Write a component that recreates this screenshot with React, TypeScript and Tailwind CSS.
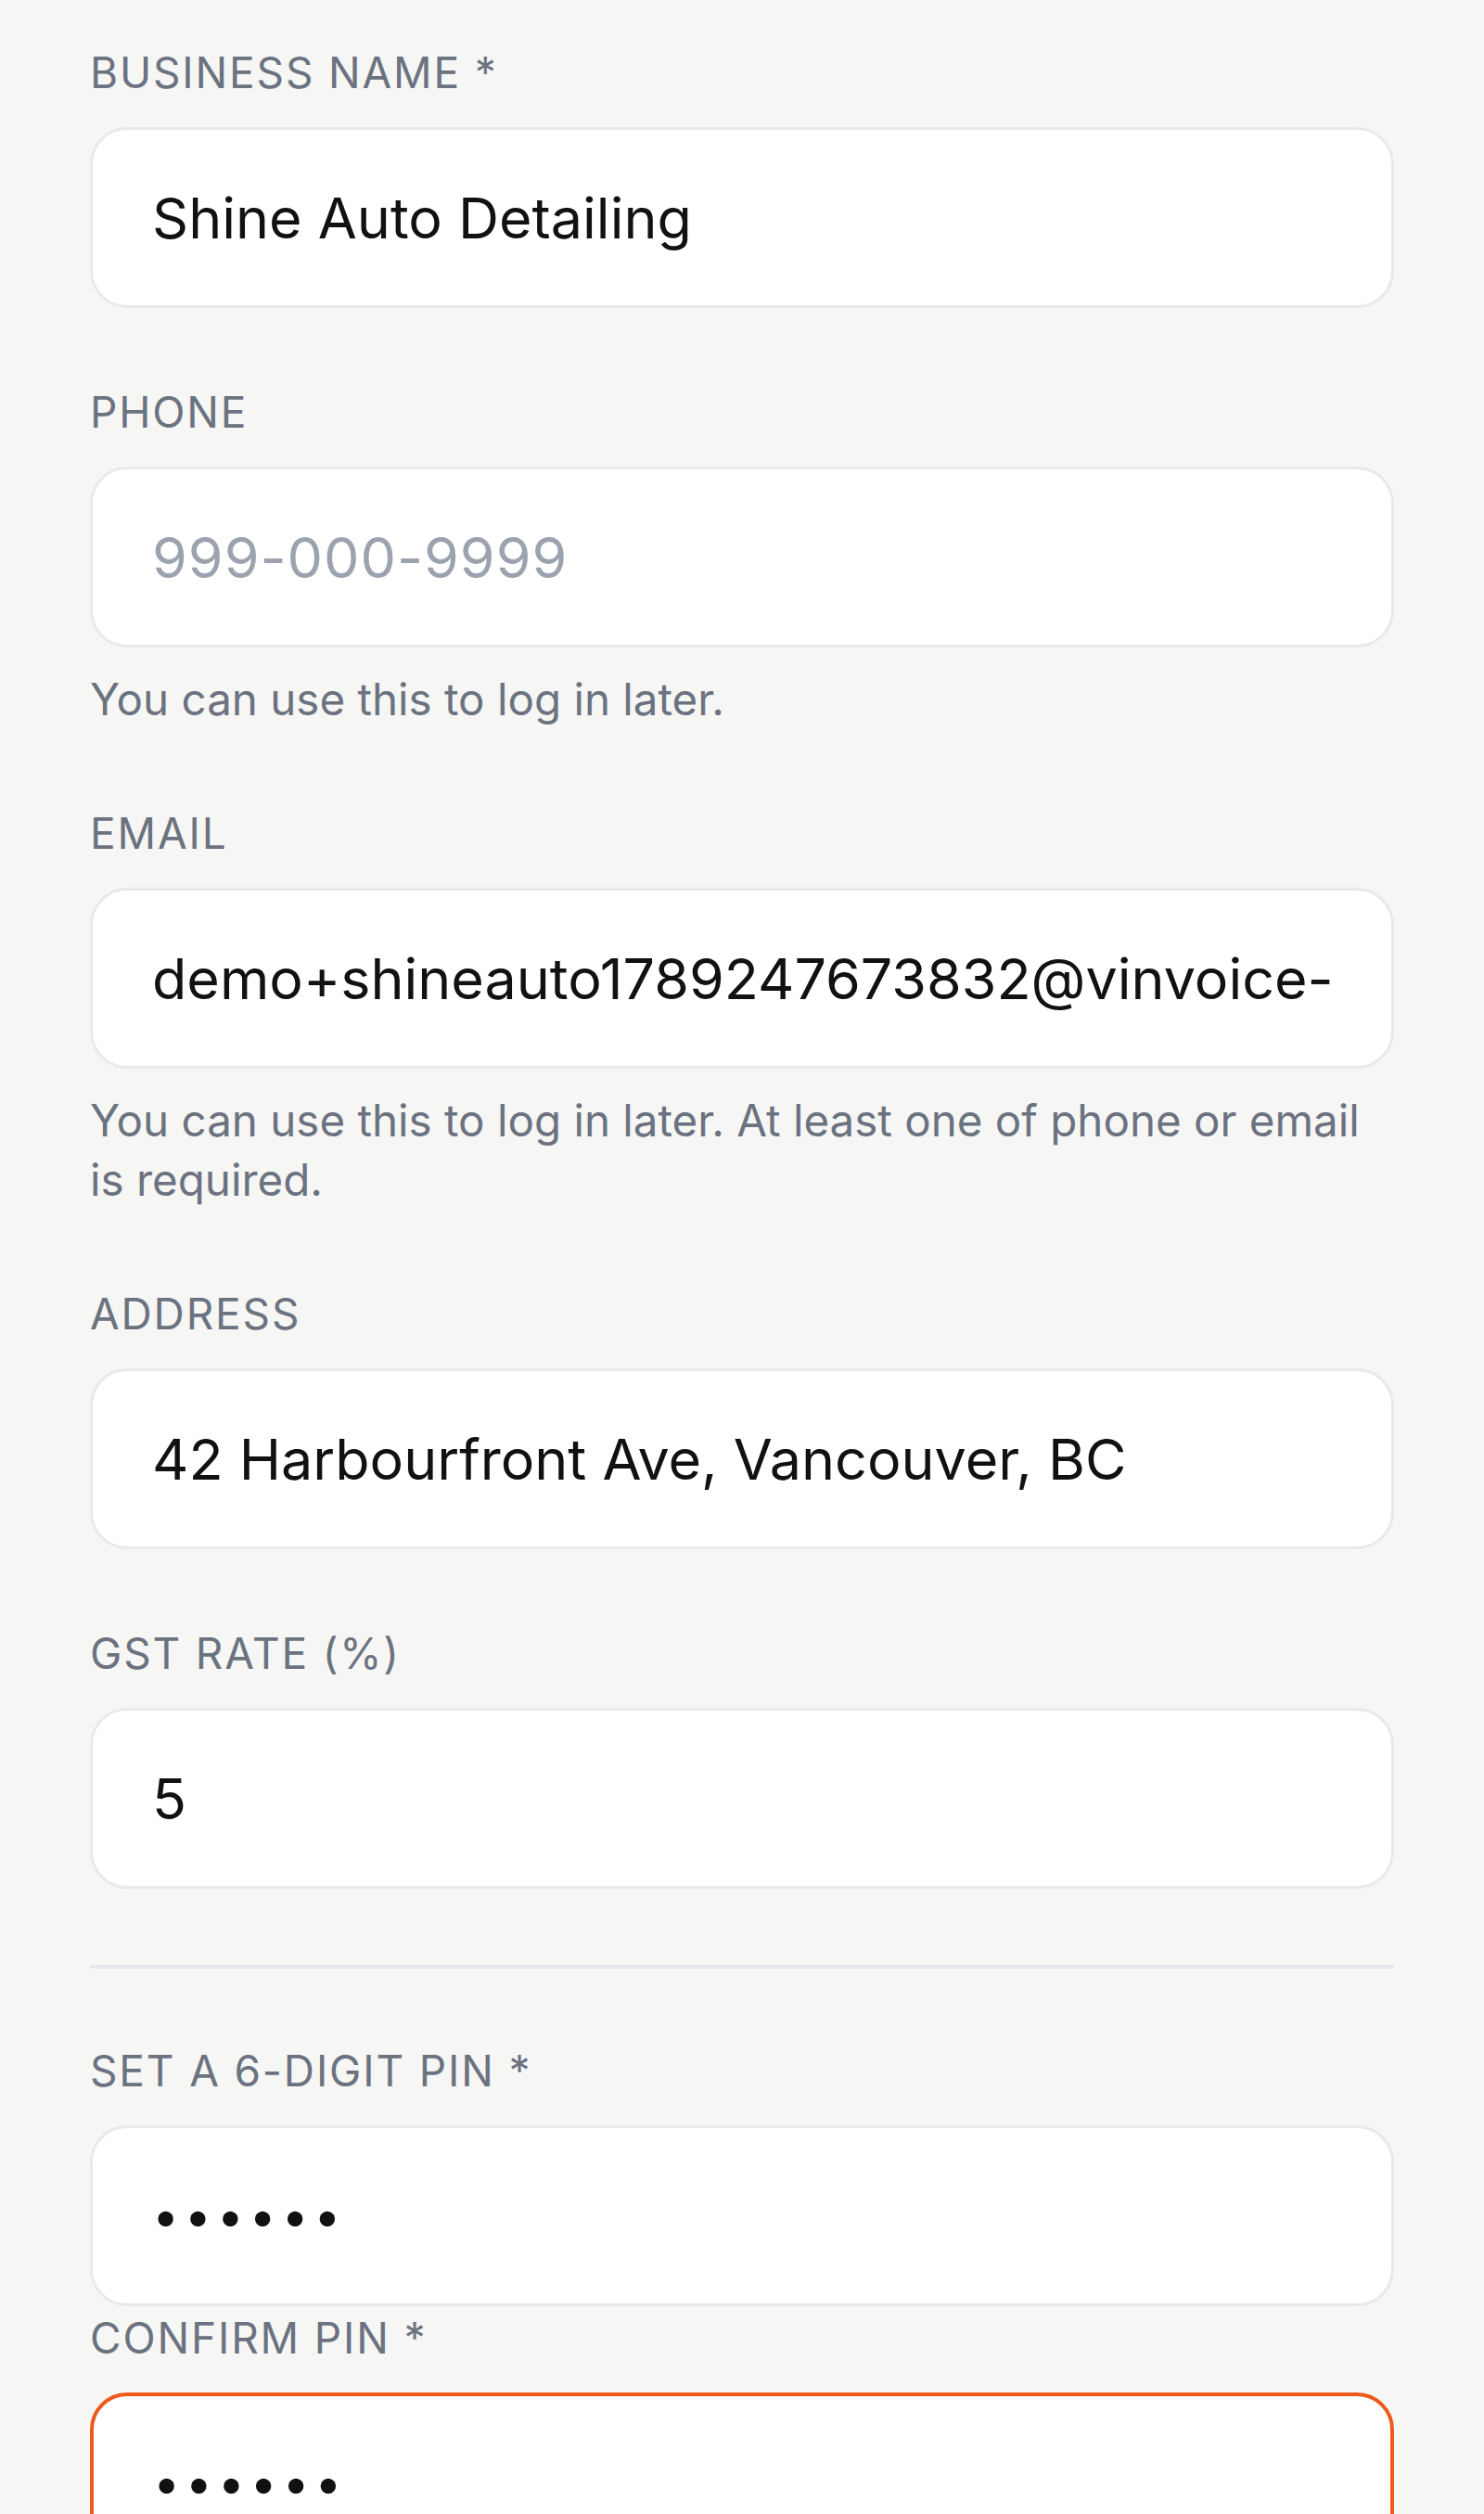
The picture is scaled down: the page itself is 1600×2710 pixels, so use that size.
import React from "react";

const labelCls =
  "block h-[56px] leading-[56px] text-[46px] tracking-[0.04em] text-[#6b7280] uppercase";
const inputBase =
  "block w-full h-[195px] rounded-[40px] bg-white pl-[64px] pr-[64px] text-[#111111] outline-none placeholder:text-[#9ca3af] font-['Inter',sans-serif]";
const helperCls = "mt-[24px] text-[47.5px] leading-[64px] text-[#6b7280]";

function Field({
  label,
  value,
  placeholder,
  helper,
  type = "text",
  error = false,
}: {
  label: string;
  value?: string;
  placeholder?: string;
  helper?: string;
  type?: string;
  error?: boolean;
}) {
  const sizeCls =
    type === "password"
      ? "text-[52px] tracking-[5.6px]"
      : placeholder
      ? "text-[61px] tracking-[1px]"
      : "text-[61px]";
  return (
    <div className="flex flex-col">
      <label className={labelCls}>{label}</label>
      <input
        type={type}
        readOnly
        defaultValue={value}
        placeholder={placeholder}
        className={`${inputBase} ${sizeCls} mt-[31px] ${
          error
            ? "border-[4px] border-[#ee5a1c] pl-[63px]"
            : "border-[3px] border-[#e9e9e7]"
        }`}
      />
      {helper && <p className={helperCls}>{helper}</p>}
    </div>
  );
}

export default function App() {
  return (
    <div className="min-h-[2710px] w-full bg-[#f6f6f4] font-['Inter',sans-serif]">
      <div className="px-[97px] pt-[50px] flex flex-col">
        <div className="flex flex-col gap-[84px]">
          <Field label="Business Name *" value="Shine Auto Detailing" />
          <Field
            label="Phone"
            placeholder="999-000-9999"
            helper="You can use this to log in later."
          />
          <Field
            label="Email"
            value="demo+shineauto1789247673832@vinvoice-"
            helper="You can use this to log in later. At least one of phone or email is required."
          />
          <Field label="Address" value="42 Harbourfront Ave, Vancouver, BC" />
          <Field label="GST Rate (%)" value="5" />
        </div>
        <div className="mt-[82px] mb-[82px] h-[4px] bg-[#e6e6ec]" />
        <div className="flex flex-col gap-[6px]">
          <Field label="Set a 6-digit PIN *" value="123456" type="password" />
          <Field label="Confirm PIN *" value="123456" type="password" error />
        </div>
      </div>
    </div>
  );
}
